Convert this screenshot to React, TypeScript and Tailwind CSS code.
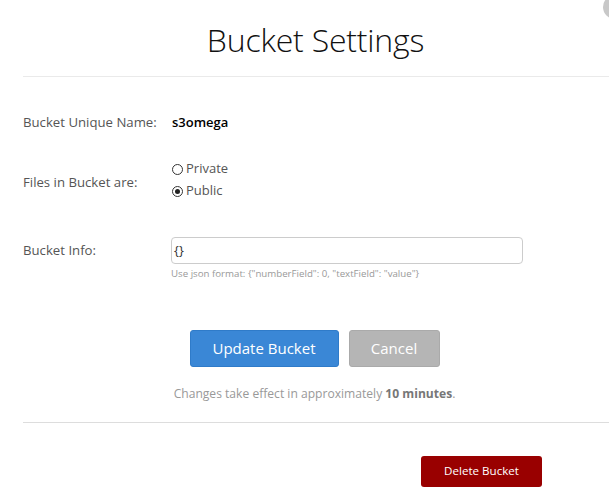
export default function App() {
  return (
    <div className="relative w-[609px] h-[500px] overflow-hidden bg-white font-['Open_Sans',sans-serif] text-[#555]">
      <div className="absolute -top-[5px] left-[603px] w-[24px] h-[24px] rounded-full bg-[#c8c8c8]" />
      <h1 className="pt-[16px] pl-[22px] text-center text-[32px] font-light tracking-[-0.2px] leading-[48px] text-[#111]">
        Bucket Settings
      </h1>
      <div className="ml-[23px] mt-[12px] border-t border-[#eaeaea]" />

      <div className="pl-[23px] pt-[33px]">
        <div className="flex items-center h-[26px]">
          <div className="w-[149px] text-[13.2px]">Bucket Unique Name:</div>
          <div className="text-[13px] font-semibold text-black">s3omega</div>
        </div>

        <div className="flex items-end mt-[24px]">
          <div className="w-[149px] text-[13.2px] pb-[7px]">Files in Bucket are:</div>
          <div className="flex flex-col gap-[4px] text-[13px]">
            <label className="flex items-center gap-[3px] h-[18px]">
              <span className="w-[11px] h-[11px] rounded-full border border-[#333] bg-white" />
              Private
            </label>
            <label className="flex items-center gap-[3px] h-[18px]">
              <span className="w-[11px] h-[11px] rounded-full border border-[#333] bg-white flex items-center justify-center">
                <span className="w-[5px] h-[5px] rounded-full bg-[#222]" />
              </span>
              Public
            </label>
          </div>
        </div>

        <div className="flex mt-[37px]">
          <div className="w-[148px] text-[13.2px] leading-[27px]">Bucket Info:</div>
          <div>
            <div className="w-[352px] h-[27px] rounded-[4px] border border-[#ccc] px-[2px] text-[13px] leading-[25px] text-[#333]">
              {"{}"}
            </div>
            <div className="mt-[3px] text-[9.7px] text-[#999]">
              Use json format: {'{"numberField": 0, "textField": "value"}'}
            </div>
          </div>
        </div>
      </div>

      <div className="flex justify-center gap-[10px] mt-[48px] pl-[20px]">
        <button className="w-[149px] h-[37px] rounded-[3px] bg-[#3a87d6] border border-[#2f7bc9] text-white text-[15px]">
          Update Bucket
        </button>
        <button className="w-[91px] h-[37px] rounded-[3px] bg-[#b5b5b5] border border-[#aaa] text-white text-[15px]">
          Cancel
        </button>
      </div>
      <p className="mt-[18px] pl-[20px] text-center text-[12.1px] text-[#999]">
        Changes take effect in approximately <b className="text-[#777]">10 minutes</b>.
      </p>

      <div className="ml-[23px] mt-[19px] border-t border-[#ddd]" />
      <div className="flex justify-end pr-[67px] mt-[33px]">
        <button className="w-[121px] h-[31px] rounded-[3px] bg-[#990000] text-white text-[11.6px]">
          Delete Bucket
        </button>
      </div>
    </div>
  );
}
